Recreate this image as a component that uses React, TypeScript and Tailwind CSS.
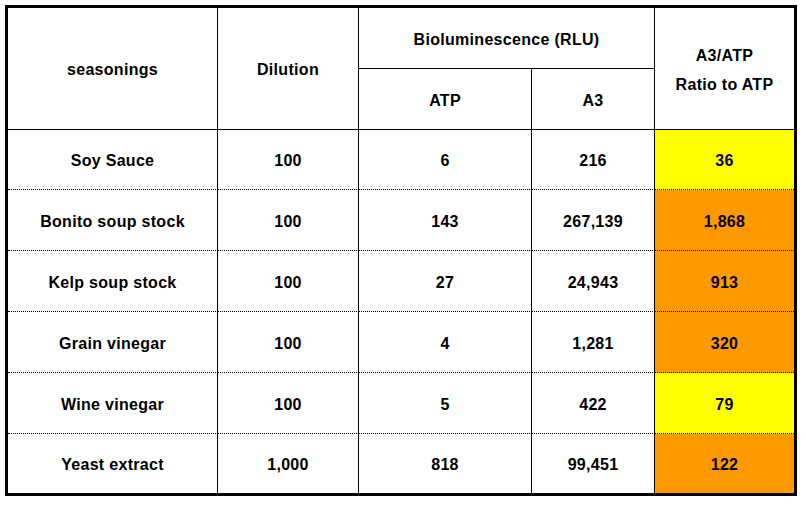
const rows = [
  { name: 'Soy Sauce', dilution: '100', atp: '6', a3: '216', ratio: '36', hi: false },
  { name: 'Bonito soup stock', dilution: '100', atp: '143', a3: '267,139', ratio: '1,868', hi: true },
  { name: 'Kelp soup stock', dilution: '100', atp: '27', a3: '24,943', ratio: '913', hi: true },
  { name: 'Grain vinegar', dilution: '100', atp: '4', a3: '1,281', ratio: '320', hi: true },
  { name: 'Wine vinegar', dilution: '100', atp: '5', a3: '422', ratio: '79', hi: false },
  { name: 'Yeast extract', dilution: '1,000', atp: '818', a3: '99,451', ratio: '122', hi: true },
];

const cell = 'flex items-center justify-center text-center border-solid border-black pt-[3px]';

export default function App() {
  return (
    <div className="w-[806px] h-[505px] bg-white pl-[5px] pt-[5px] font-['Liberation_Sans',Arial,sans-serif] font-bold text-[16px] tracking-[0.3px] text-black">
      <div className="grid w-[792px] border-[3px] border-black grid-cols-[210px_141px_173px_123px_139px] grid-rows-[61px_61px_60px_61px_61px_61px_61px_59px]">
        {/* header */}
        <div className={`${cell} row-span-2 border-r border-b`}>seasonings</div>
        <div className={`${cell} row-span-2 border-r border-b`}>Dilution</div>
        <div className={`${cell} col-span-2 border-r border-b`}>Bioluminescence (RLU)</div>
        <div className={`${cell} row-span-2 border-b flex-col leading-[29px]`}>
          <span>A3/ATP</span>
          <span>Ratio to ATP</span>
        </div>
        <div className={`${cell} border-r border-b`}>ATP</div>
        <div className={`${cell} border-r border-b`}>A3</div>

        {/* data rows, dotted separators */}
        {rows.map((r, i) => {
          const sep = i === rows.length - 1 ? '' : 'border-b [border-bottom-style:dotted]';
          return [
            <div key={`n${i}`} className={`${cell} ${sep} border-r`}>{r.name}</div>,
            <div key={`d${i}`} className={`${cell} ${sep} border-r`}>{r.dilution}</div>,
            <div key={`a${i}`} className={`${cell} ${sep} border-r`}>{r.atp}</div>,
            <div key={`b${i}`} className={`${cell} ${sep} border-r`}>{r.a3}</div>,
            <div key={`r${i}`} className={`${cell} ${sep} ${r.hi ? 'bg-[#ff9900]' : 'bg-[#ffff00]'}`}>
              {r.ratio}
            </div>,
          ];
        })}
      </div>
    </div>
  );
}
